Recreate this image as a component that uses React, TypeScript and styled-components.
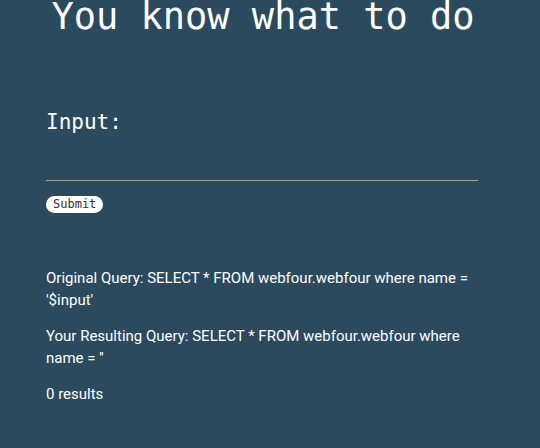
import React from "react";
import styled, { createGlobalStyle } from "styled-components";

const Global = createGlobalStyle`
  html, body {
    margin: 0;
    padding: 0;
    background: #2c4a5e;
  }
  body {
    font-family: Roboto, "Liberation Sans", sans-serif;
    color: #fff;
  }
`;

const Page = styled.div`
  min-height: 448px;
  background: #2c4a5e;
  overflow: hidden;
`;

const Title = styled.h1`
  margin: 0;
  padding-right: 14px;
  text-align: center;
  font-family: "DejaVu Sans Mono", monospace;
  font-weight: 400;
  font-size: 37px;
  line-height: 34px;
  color: #fff;
`;

const Main = styled.main`
  width: 432px;
  margin: 0 0 0 46px;
`;

const Form = styled.form`
  display: flex;
  flex-direction: column;
  align-items: flex-start;
  padding-top: 76px;
`;

const Label = styled.label`
  font-family: "DejaVu Sans Mono", monospace;
  font-size: 21px;
  line-height: 24px;
  color: #fff;
`;

const Field = styled.input`
  box-sizing: border-box;
  width: 100%;
  height: 32px;
  margin-top: 15px;
  padding: 0;
  border: none;
  border-bottom: 1px solid #a3a3a3;
  background: transparent;
  color: #fff;
  outline: none;
`;

const Button = styled.button`
  margin-top: 15px;
  height: 17px;
  padding: 0 7px;
  border: none;
  border-radius: 9px;
  background: #fff;
  color: #333;
  font-family: "DejaVu Sans Mono", monospace;
  font-size: 12px;
  line-height: 17px;
`;

const Results = styled.section`
  padding-top: 54px;
`;

const Line = styled.p`
  margin: 0 0 14px;
  font-size: 15px;
  line-height: 22px;
  color: #fff;
`;

export default function App() {
  return (
    <Page>
      <Global />
      <Title>You know what to do</Title>
      <Main>
        <Form onSubmit={(e) => e.preventDefault()}>
          <Label htmlFor="input">Input:</Label>
          <Field id="input" name="input" />
          <Button type="submit">Submit</Button>
        </Form>
        <Results>
          <Line>
            Original Query: SELECT * FROM webfour.webfour where name = '$input'
          </Line>
          <Line>
            Your Resulting Query: SELECT * FROM webfour.webfour where name = ''
          </Line>
          <Line>0 results</Line>
        </Results>
      </Main>
    </Page>
  );
}
